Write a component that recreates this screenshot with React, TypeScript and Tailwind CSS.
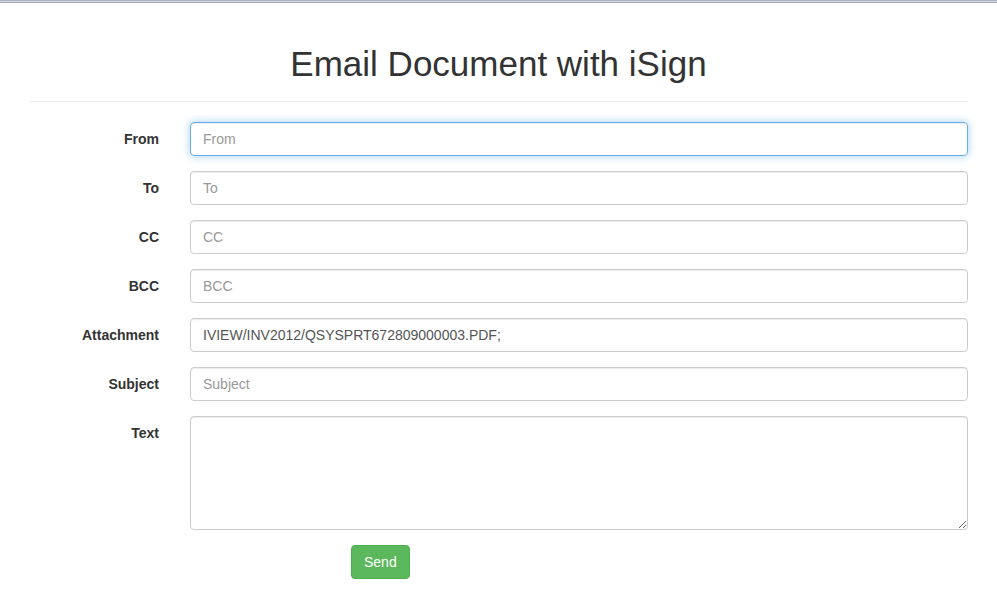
import React from "react";

const inputBase =
    "h-[34px] w-full rounded-[4px] border px-3 py-1.5 text-sm text-[#555] placeholder:text-[#999] outline-none";
const idle =
    "border-[#ccc] shadow-[inset_0_1px_1px_rgba(0,0,0,0.075)] focus:border-[#66afe9] focus:shadow-[inset_0_1px_1px_rgba(0,0,0,0.075),0_0_8px_rgba(102,175,233,0.6)]";
const focused =
    "border-[#66afe9] shadow-[inset_0_1px_1px_rgba(0,0,0,0.075),0_0_8px_rgba(102,175,233,0.6)]";

const fields = [
    { label: "From", placeholder: "From", active: true },
    { label: "To", placeholder: "To" },
    { label: "CC", placeholder: "CC" },
    { label: "BCC", placeholder: "BCC" },
    { label: "Attachment", placeholder: "", value: "IVIEW/INV2012/QSYSPRT672809000003.PDF;" },
    { label: "Subject", placeholder: "Subject" },
];

export default function App() {
    return (
        <div className="min-h-[601px] bg-white text-[#333]" style={{ fontFamily: '"Liberation Sans", Arial, sans-serif' }}>
            {/* window edge */}
            <div className="h-px bg-[#adb2c3]" />
            <div className="h-px bg-[#d9dce4]" />
            <div className="h-px bg-[#a2a6b4]" />

            <div className="mx-[29px]">
                <h1 className="mt-[41px] text-center text-[35px] leading-[39px] font-normal text-[#333]">
                    Email Document with iSign
                </h1>
                <hr className="mt-[18px] border-0 border-t border-[#eee]" />

                <form className="mt-[20px] flex flex-col gap-[15px]" onSubmit={(e) => e.preventDefault()}>
                    {fields.map((f) => (
                        <div key={f.label} className="flex items-center gap-[31px]">
                            <label className="w-[130px] shrink-0 text-right text-sm font-bold">{f.label}</label>
                            <input
                                type="text"
                                placeholder={f.placeholder}
                                defaultValue={f.value}
                                autoFocus={f.active}
                                className={`${inputBase} ${f.active ? focused : idle}`}
                            />
                        </div>
                    ))}

                    <div className="flex items-start gap-[31px]">
                        <label className="w-[130px] shrink-0 pt-[7px] text-right text-sm font-bold leading-5">Text</label>
                        <textarea
                            className={`h-[114px] w-full rounded-[4px] border px-3 py-1.5 text-sm text-[#555] outline-none ${idle}`}
                        />
                    </div>

                    <div className="pl-[322px]">
                        <button
                            type="submit"
                            className="h-[34px] rounded-[4px] border border-[#4cae4c] bg-[#5cb85c] px-3 text-sm text-white"
                        >
                            Send
                        </button>
                    </div>
                </form>
            </div>
        </div>
    );
}
